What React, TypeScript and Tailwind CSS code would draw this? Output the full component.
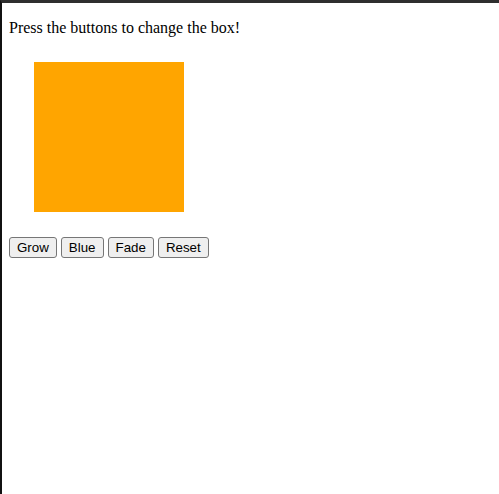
export default function App() {
  const btn =
    "bg-[#efefef] border border-[#767676] rounded-[3px] px-[7px] pt-[2px] pb-[1px] text-[13.33px] leading-[16px] text-black";
  return (
    <div className="min-h-[494px] border-t-[3px] border-t-[#2e2e2e] border-l-[2px] border-l-[#111] bg-white">
      <div className="pl-[7px] pt-[16px]" style={{ fontFamily: '"Liberation Serif", serif' }}>
        <p className="text-[16px] leading-[18px] text-black">Press the buttons to change the box!</p>
        <div className="w-[150px] h-[150px] bg-[#ffa500] m-[25px]" />
        <div className="flex gap-[4px]" style={{ fontFamily: '"Liberation Sans", Arial, sans-serif' }}>
          <button className={btn}>Grow</button>
          <button className={btn}>Blue</button>
          <button className={btn}>Fade</button>
          <button className={btn}>Reset</button>
        </div>
      </div>
    </div>
  );
}
